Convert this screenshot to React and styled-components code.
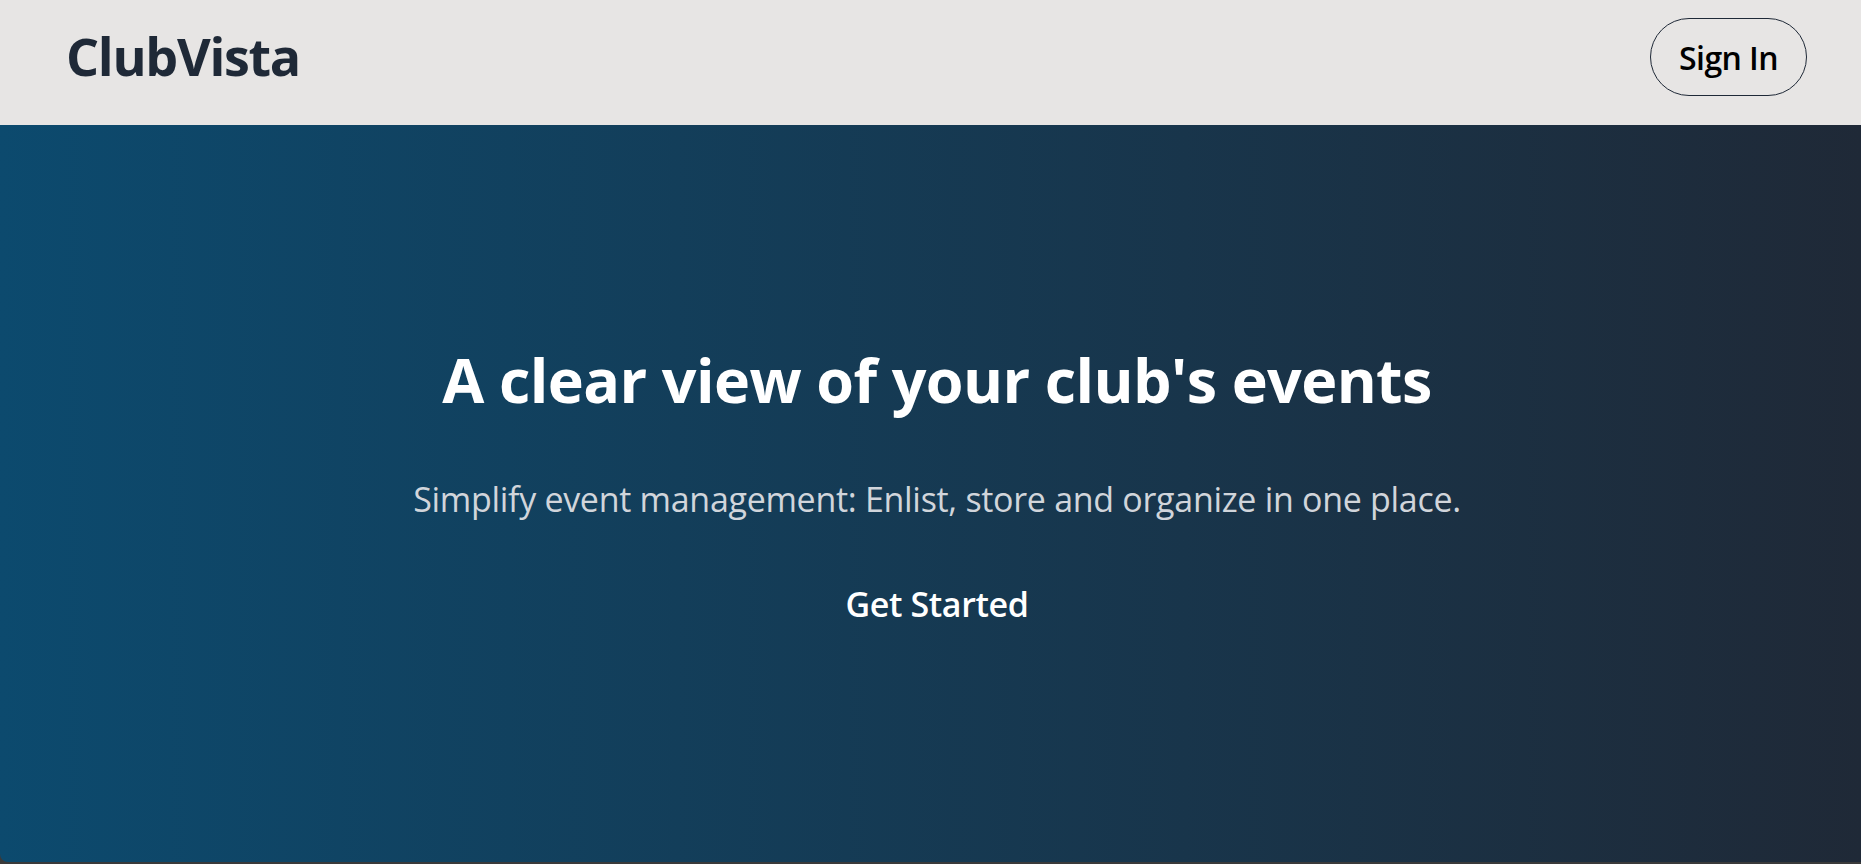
import React from 'react';
import styled, { createGlobalStyle } from 'styled-components';

const GlobalStyle = createGlobalStyle`
  html, body {
    margin: 0;
    padding: 0;
    background: #3a3a3a;
  }
  body {
    font-family: 'Open Sans', 'Noto Sans', sans-serif;
  }
`;

const Page = styled.div`
  display: flex;
  flex-direction: column;
  height: 862px;
`;

const Header = styled.header`
  display: flex;
  justify-content: space-between;
  align-items: flex-start;
  height: 125px;
  box-sizing: border-box;
  padding: 18px 54px 0 66px;
  background: #e7e5e4;
`;

const Logo = styled.h1`
  margin: 0;
  padding-top: 3px;
  font-size: 52px;
  line-height: 70px;
  font-weight: 700;
  letter-spacing: -1.3px;
  color: #1f2937;
`;

const SignInButton = styled.button`
  width: 157px;
  height: 78px;
  border: 1px solid #1f2937;
  border-radius: 999px;
  background: transparent;
  font-family: inherit;
  font-size: 32px;
  font-weight: 600;
  letter-spacing: -0.6px;
  color: #000;
  cursor: pointer;
`;

const Hero = styled.section`
  flex: 1;
  display: flex;
  flex-direction: column;
  align-items: center;
  padding: 0 0 0 13px;
  background: linear-gradient(to right, #0c4a6e, #1f2937);
  border-bottom-left-radius: 8px;
  color: #fff;
`;

const Title = styled.h2`
  margin: 215px 0 0;
  font-size: 61px;
  line-height: 80px;
  font-weight: 700;
  letter-spacing: -0.6px;
`;

const Subtitle = styled.p`
  margin: 58px 0 0;
  font-size: 34px;
  line-height: 42px;
  font-weight: 400;
  letter-spacing: -0.3px;
  color: #d1d5db;
`;

const StartButton = styled.button`
  margin-top: 63px;
  padding: 0;
  border: none;
  background: transparent;
  font-family: inherit;
  font-size: 34px;
  line-height: 42px;
  font-weight: 600;
  letter-spacing: -0.4px;
  color: #fff;
  cursor: pointer;
`;

export default function App() {
  return (
    <>
      <GlobalStyle />
      <Page>
        <Header>
          <Logo>ClubVista</Logo>
          <SignInButton>Sign In</SignInButton>
        </Header>
        <Hero>
          <Title>A clear view of your club's events</Title>
          <Subtitle>Simplify event management: Enlist, store and organize in one place.</Subtitle>
          <StartButton>Get Started</StartButton>
        </Hero>
      </Page>
    </>
  );
}
